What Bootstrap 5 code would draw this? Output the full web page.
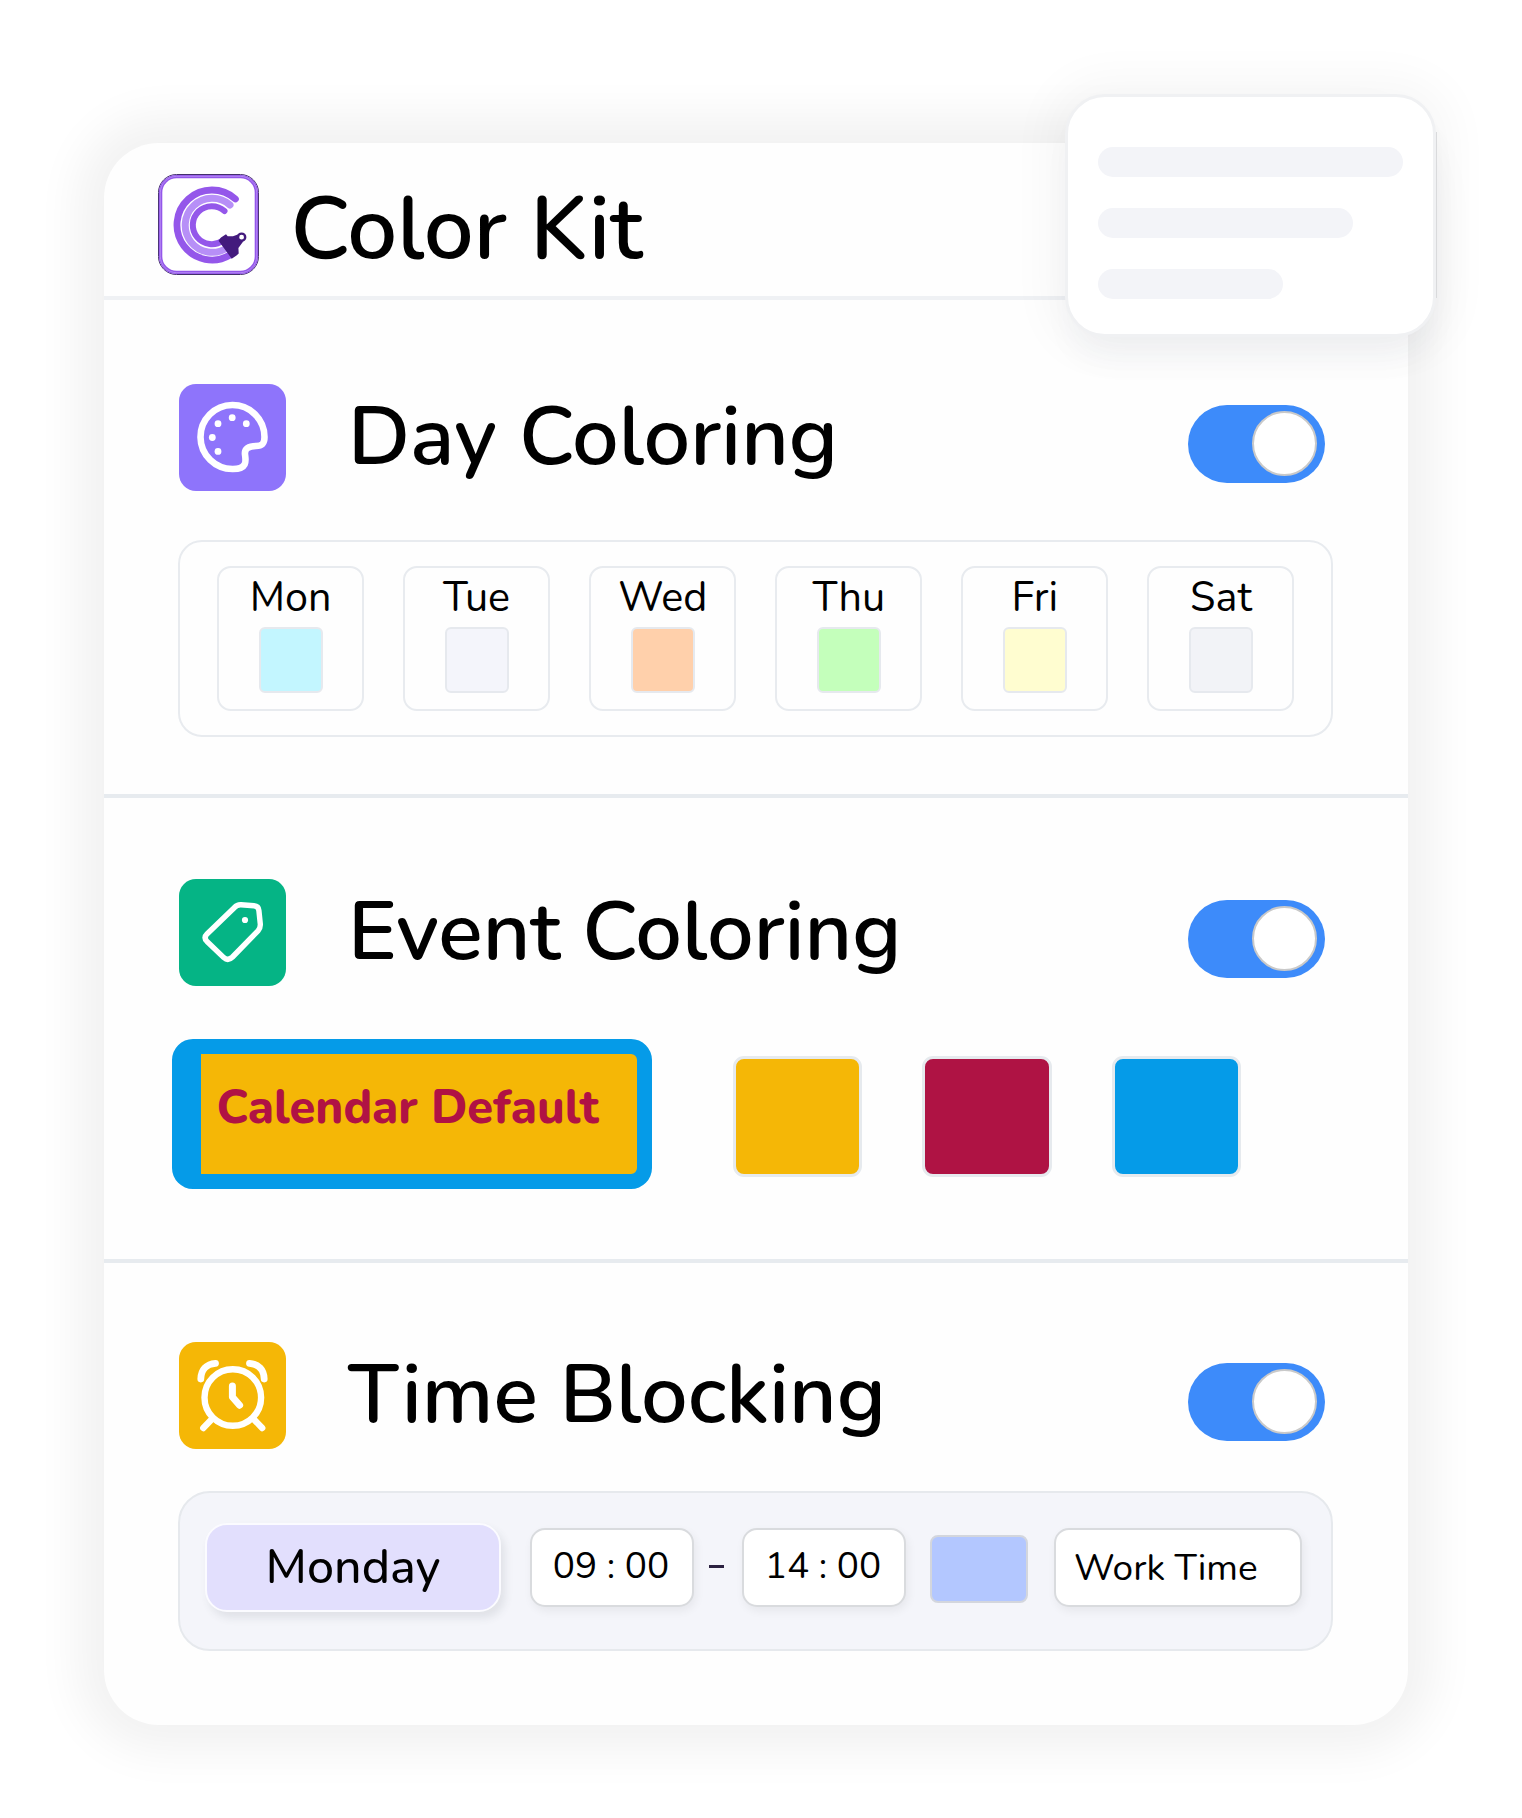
<!DOCTYPE html>
<html lang="en">
<head>
    <meta charset="UTF-8">
    <meta name="viewport" content="width=device-width, initial-scale=1.0">
    <title>Color Kit</title>
    <link href="https://cdn.jsdelivr.net/npm/bootstrap@5.3.0/dist/css/bootstrap.min.css" rel="stylesheet">
    <style>
        body {
            min-height: 100vh;
            padding: 143px 0 93px 104px;
            background-color: #fff;
            color: #000;
            font-family: Nunito, Lato, "Open Sans", sans-serif;
            overflow: hidden;
        }
        .kit {
            width: 1304px;
            height: 1582px;
            border-radius: 55px;
            background-color: #fefefe;
            box-shadow: 0 0 46px 26px rgba(0, 0, 0, 0.055);
        }
        .kit-header {
            height: 157px;
            padding-left: 53.5px;
            border-bottom: 4px solid #eff1f4;
        }
        .kit-logo {
            width: 101px;
            height: 101px;
            margin-top: 31px;
        }
        .kit-title {
            font-size: 88.5px;
            font-weight: 600;
            line-height: 100px;
            margin: 36px 0 0 32px;
        }
        .kit-section {
            padding: 0 75px 0 74px;
            border-bottom: 4px solid #e7ebef;
        }
        .section-day { height: 497.5px; padding-top: 84px; }
        .section-event { height: 465.5px; padding-top: 81.5px; }
        .section-time { padding-top: 79px; border-bottom: 0; }

        .tile {
            width: 107px;
            height: 107px;
            margin-left: 1px;
            border-radius: 17px;
        }
        .tile-purple { background-color: #8e74fb; }
        .tile-green { background-color: #05b485; }
        .tile-yellow { background-color: #f5b706; }

        .section-name {
            font-size: 82.7px;
            font-weight: 600;
            line-height: 98px;
            margin: 4px 0 0 62px;
        }
        /* on/off switch, always drawn as on */
        .toggle {
            width: 137px;
            height: 78px;
            padding: 0 8px;
            margin: 20.5px 8px 0 auto;
            border-radius: 39px;
            background-color: #3d8bfa;
        }
        .toggle span {
            width: 65px;
            height: 65px;
            border: 2px solid #c9c9c9;
            border-radius: 50%;
            background-color: #fff;
        }

        .day-panel {
            height: 197px;
            margin-top: 49px;
            padding: 24px 36.5px 0 37px;
            border: 2px solid #e8ebef;
            border-radius: 24px;
        }
        .day-box {
            width: 147px;
            height: 145px;
            border: 2px solid #e8ebef;
            border-radius: 14px;
            font-size: 41.3px;
            line-height: 48px;
            padding-top: 6px;
        }
        .day-swatch {
            width: 64px;
            height: 66px;
            margin-top: 5px;
            border: 2px solid #e6e9ee;
            border-radius: 6px;
        }

        .event-row { margin: 53px 0 0 -6.5px; }
        .event-chip {
            width: 480px;
            height: 150px;
            border: 15px solid #059be8;
            border-left-width: 29px;
            border-radius: 21px;
            background-color: #f5b706;
            color: #b01244;
            font-size: 47.1px;
            line-height: 56px;
            font-weight: 800;
            padding: 26px 0 0 16px;
            white-space: nowrap;
        }
        .event-swatches { gap: 60px; margin: 17px 0 0 81px; }
        .event-swatch {
            width: 129.5px;
            height: 121px;
            border: 3px solid #e6eaee;
            border-radius: 11px;
        }

        .time-panel {
            height: 160px;
            margin-top: 42px;
            padding: 30px 25px 0;
            border: 2px solid #e6e9ed;
            border-radius: 32px;
            background-color: #f4f5fa;
        }
        .weekday {
            width: 296px;
            height: 89px;
            border: 2px solid #fbfbff;
            border-radius: 22px;
            background-color: #e2dffd;
            box-shadow: 4px 6px 9px rgba(60, 70, 80, 0.11);
            font-size: 48.3px;
            font-weight: 500;
            line-height: 85px;
        }
        .field {
            height: 79px;
            margin-top: 5px;
            border: 2px solid #d9dbde;
            border-radius: 15px;
            background-color: #fff;
            box-shadow: 2px 4px 10px rgba(0, 0, 0, 0.06);
            font-size: 37px;
            line-height: 73px;
            white-space: pre;
        }
        .field-hour { width: 164px; padding-right: 2px; }
        .field-label { width: 248px; margin-left: 26px; padding: 2px 0 0 18px; }
        .dash { width: 15px; height: 3px; margin: 42px 18px 0 15px; background-color: #2b2140; }
        .time-swatch {
            width: 98px;
            height: 68px;
            margin: 12px 0 0 24px;
            border: 2px solid #d3d6dd;
            border-radius: 8px;
            background-color: #b3c7ff;
        }

        /* note card that hangs over the top right corner */
        .note {
            top: -49px;
            left: 961px;
            width: 371px;
            height: 243px;
            padding: 50px 30px 0;
            border: 3px solid #f0f1f3;
            border-radius: 40px;
            background-color: #fff;
            box-shadow: 0 26px 36px -10px rgba(40, 60, 90, 0.05), 0 0 46px 16px rgba(0, 0, 0, 0.035);
        }
        .note-line {
            height: 30px;
            margin-bottom: 31px;
            border-radius: 15px;
            background-color: #f3f4f8;
        }
        .note-edge { top: -11px; left: 1332px; width: 1px; height: 166px; background-color: #d9dadc; }
    </style>
</head>
<body>

    <div class="kit position-relative">
        <div class="kit-header d-flex align-items-start">
            <svg class="kit-logo flex-shrink-0" viewBox="0 0 101 101" fill="none">
                <rect x="0.5" y="0.5" width="100" height="100" rx="18" fill="#fff" stroke="#43306b"/>
                <rect x="2.6" y="2.6" width="95.8" height="95.8" rx="16" stroke="#9457ea" stroke-width="3.4"/>
                <rect x="2.3" y="2.3" width="96.4" height="96.4" rx="16.5" stroke="#bd96f5" stroke-width="0.8"/>
                <path d="M77.4 25A35 35 0 1 0 72 81" stroke="#9457ea" stroke-width="6.8" stroke-linecap="round"/>
                <path d="M72 31A27 27 0 1 0 69 73.9" stroke="#b78ff7" stroke-width="7" stroke-linecap="round"/>
                <path d="M66.5 37A19 19 0 1 0 65 66.5" stroke="#9457ea" stroke-width="6" stroke-linecap="round"/>
                <path d="M60.5 66.7L63 63.5L68 60.3L69.7 62.3L75 62.2L79.8 60.5L85 67.8L80.4 74L80.7 79.5L78.5 81.5L73.7 84.7Z" fill="#431a7d"/>
                <circle cx="83.6" cy="63.2" r="3.6" fill="#fff" stroke="#431a7d" stroke-width="2.4"/>
            </svg>
            <h1 class="kit-title mb-0">Color Kit</h1>
        </div>

        <div class="kit-section section-day">
            <div class="d-flex align-items-start">
                <div class="tile tile-purple">
                    <svg width="107" height="107" viewBox="0 0 107 107" fill="none">
                        <path d="M54 85A32 32 0 1 1 85.5 53C85.5 60 83 62 77 62C69.5 62 65.3 65 66 70.5C66.7 76 69 85 54 85Z" stroke="#fff" stroke-width="6.6" stroke-linejoin="round"/>
                        <g fill="#fff">
                            <circle cx="39" cy="39.7" r="3.4"/>
                            <circle cx="53.2" cy="33.7" r="3.4"/>
                            <circle cx="67.3" cy="39.7" r="3.4"/>
                            <circle cx="33.3" cy="53.5" r="3.4"/>
                            <circle cx="39" cy="67.4" r="3.4"/>
                        </g>
                    </svg>
                </div>
                <h2 class="section-name mb-0">Day Coloring</h2>
                <div class="toggle d-flex align-items-center justify-content-end"><span></span></div>
            </div>

            <div class="day-panel d-flex justify-content-between">
                <div class="day-box d-flex flex-column align-items-center">Mon<div class="day-swatch" style="background-color: #c3f6ff"></div></div>
                <div class="day-box d-flex flex-column align-items-center">Tue<div class="day-swatch" style="background-color: #f4f5fb"></div></div>
                <div class="day-box d-flex flex-column align-items-center">Wed<div class="day-swatch" style="background-color: #ffd0ab"></div></div>
                <div class="day-box d-flex flex-column align-items-center">Thu<div class="day-swatch" style="background-color: #c4ffbb"></div></div>
                <div class="day-box d-flex flex-column align-items-center">Fri<div class="day-swatch" style="background-color: #fffdd0"></div></div>
                <div class="day-box d-flex flex-column align-items-center">Sat<div class="day-swatch" style="background-color: #f2f3f7"></div></div>
            </div>
        </div>

        <div class="kit-section section-event">
            <div class="d-flex align-items-start">
                <div class="tile tile-green">
                    <svg width="107" height="107" viewBox="0 0 107 107" fill="none">
                        <path d="M55.5 28.5Q58 25.6 62 25.8L75 26.8Q79.5 27.2 79.9 31.5L81.3 45Q81.6 49 79 51.8L53.5 78Q49 82.4 44.8 78.6L28 62.5Q24.3 58.6 28 55Z" stroke="#fff" stroke-width="5.4" stroke-linejoin="round"/>
                        <circle cx="66" cy="41" r="3.1" fill="#fff"/>
                    </svg>
                </div>
                <h2 class="section-name mb-0">Event Coloring</h2>
                <div class="toggle d-flex align-items-center justify-content-end"><span></span></div>
            </div>

            <div class="event-row d-flex align-items-start">
                <div class="event-chip">Calendar Default</div>
                <div class="event-swatches d-flex">
                    <div class="event-swatch" style="background-color: #f5b706"></div>
                    <div class="event-swatch" style="background-color: #af1344"></div>
                    <div class="event-swatch" style="background-color: #059be8"></div>
                </div>
            </div>
        </div>

        <div class="kit-section section-time">
            <div class="d-flex align-items-start">
                <div class="tile tile-yellow">
                    <svg width="107" height="107" viewBox="0 0 107 107" fill="none" stroke="#fff" stroke-width="6.4" stroke-linecap="round" stroke-linejoin="round">
                        <circle cx="53.8" cy="55.5" r="28.3"/>
                        <path d="M53.4 44V55L60.6 63.2" stroke-width="7"/>
                        <path d="M33 77L24.3 86M74.5 77L83.2 86"/>
                        <path d="M21.8 37C22 27.5 27.5 22 36.5 21.3M85.2 37C85 27.5 79.5 22 70.5 21.3" stroke-width="6.8"/>
                    </svg>
                </div>
                <h2 class="section-name mb-0">Time Blocking</h2>
                <div class="toggle d-flex align-items-center justify-content-end"><span></span></div>
            </div>

            <div class="time-panel d-flex align-items-start">
                <div class="weekday text-center">Monday</div>
                <div class="field field-hour text-center" style="margin-left: 29px">09 : 00</div>
                <div class="dash"></div>
                <div class="field field-hour text-center">14 : 00</div>
                <div class="time-swatch"></div>
                <div class="field field-label">Work Time</div>
            </div>
        </div>

        <div class="note position-absolute">
            <div class="note-line"></div>
            <div class="note-line" style="width: 255px"></div>
            <div class="note-line" style="width: 185px"></div>
        </div>
        <div class="note-edge position-absolute"></div>
    </div>

    <script src="https://cdn.jsdelivr.net/npm/bootstrap@5.3.0/dist/js/bootstrap.bundle.min.js"></script>
</body>
</html>
